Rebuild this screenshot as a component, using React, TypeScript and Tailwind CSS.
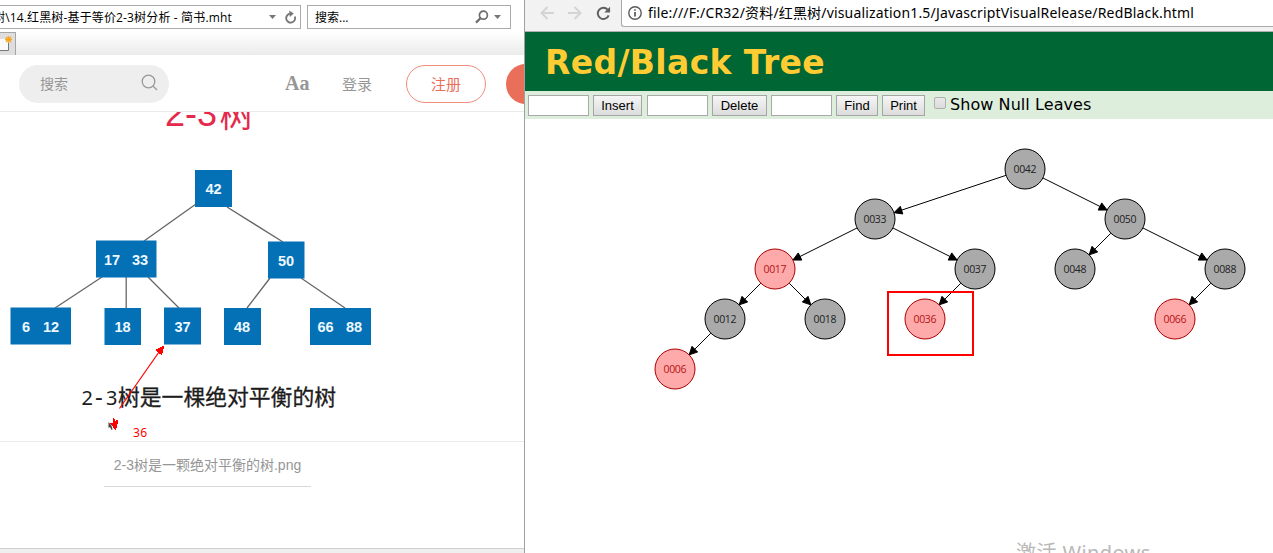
import React from "react";

type TreeNode = { id: string; x: number; y: number; red?: boolean };

const nodes: TreeNode[] = [
  { id: "0042", x: 500, y: 50 },
  { id: "0033", x: 350, y: 100 },
  { id: "0050", x: 600, y: 100 },
  { id: "0017", x: 250, y: 150, red: true },
  { id: "0037", x: 450, y: 150 },
  { id: "0048", x: 550, y: 150 },
  { id: "0088", x: 700, y: 150 },
  { id: "0012", x: 200, y: 200 },
  { id: "0018", x: 300, y: 200 },
  { id: "0036", x: 400, y: 200, red: true },
  { id: "0066", x: 650, y: 200, red: true },
  { id: "0006", x: 150, y: 250, red: true },
];

const edges: [string, string][] = [
  ["0042", "0033"],
  ["0042", "0050"],
  ["0033", "0017"],
  ["0033", "0037"],
  ["0050", "0048"],
  ["0050", "0088"],
  ["0017", "0012"],
  ["0017", "0018"],
  ["0037", "0036"],
  ["0088", "0066"],
  ["0012", "0006"],
];

const RADIUS = 20;

function Edge({ from, to }: { from: TreeNode; to: TreeNode }) {
  const dx = to.x - from.x;
  const dy = to.y - from.y;
  const len = Math.hypot(dx, dy);
  const ux = dx / len;
  const uy = dy / len;
  const x1 = from.x + ux * RADIUS;
  const y1 = from.y + uy * RADIUS;
  const x2 = to.x - ux * RADIUS;
  const y2 = to.y - uy * RADIUS;
  const bx = x2 - ux * 8;
  const by = y2 - uy * 8;
  const head = `${x2},${y2} ${bx - uy * 4},${by + ux * 4} ${bx + uy * 4},${by - ux * 4}`;
  return (
    <g stroke="#000" fill="#000" strokeWidth="1">
      <line x1={x1} y1={y1} x2={x2} y2={y2} />
      <polygon points={head} />
    </g>
  );
}

function RedBlackTree() {
  const find = (id: string) => nodes.find((n) => n.id === id)!;
  return (
    <svg width="748" height="400" viewBox="0 0 748 400" className="block shrink-0">
      {edges.map(([a, b]) => (
        <Edge key={a + b} from={find(a)} to={find(b)} />
      ))}
      {nodes.map((n) => (
        <g key={n.id}>
          <circle cx={n.x} cy={n.y} r={RADIUS} fill={n.red ? "#ffaaaa" : "#aaaaaa"} stroke={n.red ? "#aa0000" : "#000"} />
          <text
            x={n.x}
            y={n.y + 4}
            textAnchor="middle"
            textLength="23"
            fontSize="10.5"
            fill={n.red ? "#b31414" : "#222"}
            className="font-['Open_Sans',sans-serif]"
          >
            {n.id}
          </text>
        </g>
      ))}
      <rect x="363" y="173" width="85" height="63" fill="none" stroke="#f00" strokeWidth="2" />
    </svg>
  );
}

type Box = { x: number; y: number; w: number; labels: [string, number][] };

const boxes: Box[] = [
  { x: 195, y: 170, w: 37, labels: [["42", 213.5]] },
  { x: 96, y: 240.5, w: 60.5, labels: [["17", 112], ["33", 140]] },
  { x: 268, y: 241.5, w: 36.5, labels: [["50", 286]] },
  { x: 10.5, y: 307.5, w: 60.5, labels: [["6", 26], ["12", 51]] },
  { x: 104.5, y: 308, w: 36.5, labels: [["18", 122.5]] },
  { x: 164, y: 307.5, w: 37, labels: [["37", 182.5]] },
  { x: 224, y: 308, w: 37, labels: [["48", 242]] },
  { x: 310, y: 308, w: 61, labels: [["66", 325.5], ["88", 354]] },
];

const links = [
  "M196 204 144 241",
  "M227 207 283 242",
  "M102 277 55 308",
  "M126.2 277V308",
  "M148 277 179 308",
  "M270 278 247 308",
  "M301 278 345 308",
];

/* Canvas coordinates start at the page header's lower edge. */
function TwoThreeTree() {
  return (
    <svg width="524" height="329" viewBox="0 112 524 329" className="block">
      <text x="165" y="126" fontSize="36" fill="#e4294b" className="font-['Liberation_Sans',sans-serif]">
        2-3
      </text>
      <text x="219.500" y="127" fontSize="34" fill="#e4294b" className="font-['Noto_Sans_CJK_SC',sans-serif]">
        树
      </text>
      {links.map((d) => (
        <path key={d} d={d} stroke="#666" strokeWidth="1.3" fill="none" />
      ))}
      {boxes.map((b) => (
        <g key={b.x}>
          <rect x={b.x} y={b.y} width={b.w} height="37" fill="#0471b7" />
          {b.labels.map(([t, cx]) => (
            <text
              key={t}
              x={cx}
              y={b.y + 24}
              textAnchor="middle"
              fontSize="14.5"
              fontWeight="bold"
              fill="#eef8ff"
              className="font-['Liberation_Sans',sans-serif]"
            >
              {t}
            </text>
          ))}
        </g>
      ))}
      <text x="81.5" y="405" fontSize="20" fill="#1c1c1c" className="font-['Noto_Sans',sans-serif]">
        2
      </text>
      <text x="95" y="405" fontSize="24" fill="#1c1c1c" className="font-['Noto_Sans',sans-serif]">
        -
      </text>
      <text x="106" y="405" fontSize="20" fill="#1c1c1c" className="font-['Noto_Sans',sans-serif]">
        3
      </text>
      <text
        x="118"
        y="405"
        fontSize="21.8"
        fill="#1c1c1c"
        stroke="#1c1c1c"
        strokeWidth="0.3"
        textLength="218"
        className="font-['Noto_Sans_CJK_SC',sans-serif]"
      >
        树是一棵绝对平衡的树
      </text>
      <path d="M108.500 422v6l1.500-1 1.500 3 1-.5-1-4Z" fill="#444" />
      <path d="M119.500 408.500 159 352" stroke="#f00" strokeWidth="1.200" />
      <path d="M164.500 345 155 350 162 355.500ZM113.500 418l2 2.500 3-1-2.500 11-6-7 3-1Z" fill="#f00" shapeRendering="crispEdges" />
      <text x="133" y="437" fontSize="12" fill="#f00" textLength="14" className="font-['Noto_Sans',sans-serif]">
        36
      </text>
    </svg>
  );
}

function Caret() {
  return (
    <svg width="7" height="4" viewBox="0 0 7 4" className="block">
      <path d="M0 0h7L3.5 4Z" fill="#777" />
    </svg>
  );
}

function Reload({ size, color }: { size: number; color: string }) {
  return (
    <svg width={size} height={size} viewBox="0 0 16 16" className="block">
      <path d="M13.5 10A6 6 0 1 1 12.4 3.9" fill="none" stroke={color} strokeWidth="2.1" />
      <path d="M15 0.8V7H8.8Z" fill={color} />
    </svg>
  );
}

function ReaderWindow() {
  return (
    <div className="flex h-full w-[524px] shrink-0 flex-col overflow-hidden bg-white">
      <div className="flex h-8 shrink-0 pt-[5px]">
        <div className="flex h-6 w-[301px] items-center overflow-hidden border border-l-0 border-[#ababab] text-black">
          <span className="-ml-[7px] w-[276px] shrink-0 pt-px font-['Open_Sans','Noto_Sans_CJK_SC',sans-serif] text-[12px] tracking-[0.15px] whitespace-nowrap">
            树\14.红黑树-基于等价2-3树分析 - 简书.mht
          </span>
          <Caret />
          <span className="ml-2">
            <svg width="13" height="14" viewBox="0 0 13 14" className="block">
              <path d="M10.900 6.500A4.500 4.500 0 1 1 6.400 3.600" fill="none" stroke="#777" strokeWidth="1.9" />
              <path d="M5.200 0.500 9.800 3.600 5.800 7Z" fill="#777" />
            </svg>
          </span>
        </div>
        <div className="ml-1.5 flex h-6 w-[204px] items-center border border-[#ababab] pl-[7px] font-['Open_Sans','Noto_Sans_CJK_SC',sans-serif] text-xs text-black">
          <span className="w-40 pt-px">搜索...</span>
          <svg width="14" height="14" viewBox="0 0 14 14" className="block">
            <circle cx="8.4" cy="5.2" r="4" fill="none" stroke="#6d6d6d" strokeWidth="1.7" />
            <path d="M5.4 8.2 1 12.6" stroke="#6d6d6d" strokeWidth="2.2" />
          </svg>
          <span className="ml-[5px]">
            <Caret />
          </span>
        </div>
      </div>
      <div className="flex h-[23px] shrink-0 bg-linear-to-b from-white to-[#ebebeb]">
        <div className="h-full w-4 border-t border-r border-[#a5a5a5] bg-[#dedede]">
          <svg width="15" height="22" viewBox="0 0 15 22" className="block">
            <path d="M0 6h8v12H0Z" fill="#fafafa" />
            <path d="M0 17.5h8.500V10" fill="none" stroke="#777" />
            <path d="M8.500 3v7M5 6.500h7M6 4l5 5M11 4l-5 5" stroke="#f5a623" strokeWidth="1.300" />
          </svg>
        </div>
      </div>
      <div className="flex h-[57px] shrink-0 items-center border-b border-[#eaeaea] pl-[19px] font-['Liberation_Sans','Noto_Sans_CJK_SC',sans-serif] text-[15px] text-[#969696]">
        <div className="mt-[2px] flex h-[38px] w-[150px] shrink-0 items-center justify-between rounded-full bg-[#eeeeee] pr-[11px] pl-[21px]">
          <span className="pt-px text-[14px]">搜索</span>
          <svg width="17" height="17" viewBox="0 0 17 17" className="-mt-1 block" fill="none" stroke="#999" strokeWidth="1.3">
            <circle cx="7.500" cy="7.500" r="6.300" />
            <path d="m12 12 4 4" />
          </svg>
        </div>
        <span className="ml-[116px] w-[57px] shrink-0 font-['Liberation_Serif',serif] text-[20px] font-bold">Aa</span>
        <span className="mt-[4px] w-[64px] shrink-0">登录</span>
        <span className="mt-[2px] flex h-[38px] w-20 shrink-0 items-center justify-center rounded-full border border-[#ee8d7b] pt-[2px] text-[#ea6f5a]">注册</span>
        <span className="mt-[2px] ml-5 h-10 w-[100px] shrink-0 rounded-full bg-[#ea6f5a]" />
      </div>
      <div className="h-[329px] shrink-0">
        <TwoThreeTree />
      </div>
      <div className="flex grow flex-col items-center border-t border-[#eaeaea] pr-[109px]">
        <span className="h-[45px] w-[207px] border-b border-[#d9d9d9] pt-[13px] text-center font-['Liberation_Sans','Noto_Sans_CJK_SC',sans-serif] text-[14px] leading-5 whitespace-nowrap text-[#969696]">
          2-3树是一颗绝对平衡的树.png
        </span>
      </div>
      <div className="h-[5px] shrink-0 border-t border-[#cfcfcf] bg-[#efefef]" />
    </div>
  );
}

function Field() {
  return <input className="h-[21px] w-[61px] border border-[#a9a9a9] bg-white" />;
}

function ToolButton({ label, className }: { label: string; className: string }) {
  return (
    <button
      className={`h-[21px] border border-[#a5a5a5] bg-linear-to-b from-[#f6f6f6] to-[#dcdcdc] text-center font-['Liberation_Sans',sans-serif] text-[13px] leading-[19px] text-black ${className}`}
    >
      {label}
    </button>
  );
}

function BrowserWindow() {
  return (
    <div className="flex h-full min-w-0 grow flex-col overflow-hidden border-l border-[#a0a0a0] bg-white">
      <div className="flex h-8 shrink-0 border-b border-[#b0b0b0] bg-[#f2f2f2]">
        <div className="flex h-[26px] w-24 shrink-0 items-center gap-[14px] pl-[15px]">
          <svg width="14" height="14" viewBox="0 0 14 14" fill="none" stroke="#d4d4d4" strokeWidth="2">
            <path d="M14 7H1.500M7.500 1 1.500 7l6 6" />
          </svg>
          <svg width="14" height="14" viewBox="0 0 14 14" fill="none" stroke="#d4d4d4" strokeWidth="2">
            <path d="M0 7h12.500M6.500 1l6 6-6 6" />
          </svg>
          <Reload size={15} color="#5f5f5f" />
        </div>
        <div className="flex h-[27px] min-w-0 grow items-center rounded-bl-[3px] border-b border-l border-[#a9a9a9] bg-white pl-1.5">
          <svg width="14" height="14" viewBox="0 0 14 14" fill="none" stroke="#5a5a5a" strokeWidth="1.400">
            <circle cx="7" cy="7" r="6.200" />
            <path d="M7 6v4.500M7 3.200v1.600" strokeWidth="1.700" />
          </svg>
          <span className="-mt-px ml-[6px] font-['Noto_Sans','Noto_Sans_CJK_SC',sans-serif] text-[14px] tracking-[0.17px] whitespace-nowrap text-black">
            file:///F:/CR32/资料/红黑树/visualization1.5/JavascriptVisualRelease/RedBlack.html
          </span>
        </div>
      </div>
      <h1 className="flex h-[59px] shrink-0 items-center bg-[#006633] pt-[2px] pl-5 font-['DejaVu_Sans',sans-serif] text-[33px] font-bold tracking-[0.35px] text-[#ffcc33]">
        Red/Black Tree
      </h1>
      <div className="flex h-7 shrink-0 items-start bg-[#ddeedd] pt-1 pl-[3px]">
        <Field />
        <ToolButton label="Insert" className="mr-[5px] ml-1 w-[49px]" />
        <Field />
        <ToolButton label="Delete" className="mr-1 ml-1 w-[55px]" />
        <Field />
        <ToolButton label="Find" className="ml-1 w-[42px]" />
        <ToolButton label="Print" className="ml-1 w-[43px]" />
        <span className="mt-[2px] ml-[9px] h-3 w-3 rounded-[2px] border border-[#b0b0b0] bg-linear-to-b from-[#e8e8e8] to-[#dcdcdc]" />
        <span className="ml-1 font-['DejaVu_Sans',sans-serif] text-[16px] leading-[20px] tracking-[0.07px] whitespace-nowrap text-black">Show Null Leaves</span>
      </div>
      <RedBlackTree />
      <div className="flex grow items-start overflow-hidden pt-[20px] pl-[491px]">
        <span className="font-['Noto_Sans','Noto_Sans_CJK_SC',sans-serif] text-[20px] leading-[28px] tracking-[0.4px] whitespace-nowrap text-[#b8b8b8]">激活 Windows</span>
      </div>
    </div>
  );
}

export default function App() {
  return (
    <div className="flex h-[553px] w-[1273px] overflow-hidden bg-white">
      <ReaderWindow />
      <BrowserWindow />
    </div>
  );
}
